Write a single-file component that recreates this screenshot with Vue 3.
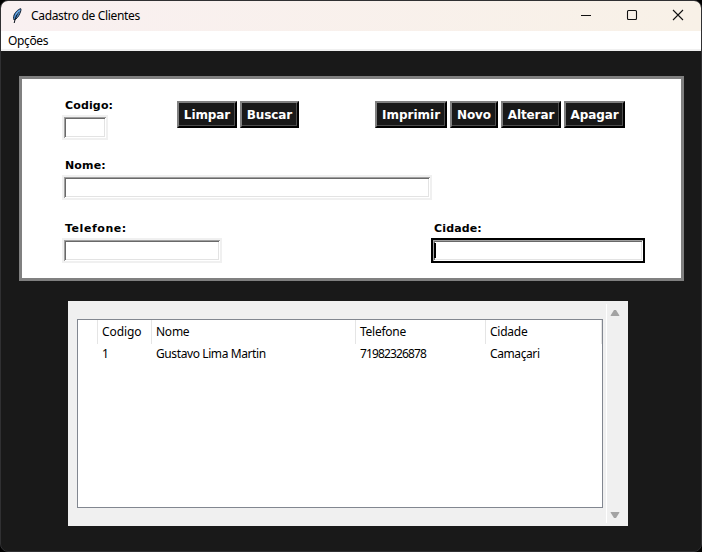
<script setup>
import { ref } from 'vue'

const searchActions = ['Limpar', 'Buscar']
const recordActions = ['Imprimir', 'Novo', 'Alterar', 'Apagar']
const columns = ['Codigo', 'Nome', 'Telefone', 'Cidade']
const clients = ref([
  { Codigo: '1', Nome: 'Gustavo Lima Martin', Telefone: '71982326878', Cidade: 'Camaçari' },
])
</script>

<template>
  <div class="window">
    <header class="titlebar">
      <svg class="feather" width="12" height="18" viewBox="0 0 12 18">
        <path d="M9.800 1.700C7 2.200 3.400 5.800 2.700 9.400c-.3 1.500-.1 2.700.4 3.600 2.200-.7 4.500-3.300 5.700-6.400C9.700 4.500 10.300 2.800 9.800 1.700z" fill="#4b8fd8" stroke="#14202e" stroke-width="1" />
        <path d="M8 4.500C6 7 4.300 11 3.200 16" fill="none" stroke="#101820" stroke-width="1.100" />
        <path d="M8.800 3.300L5 7.500" stroke="#8fc4f2" stroke-width="1" />
      </svg>
      <span class="title">Cadastro de Clientes</span>
      <div class="controls">
        <svg width="12" height="12" viewBox="0 0 12 12"><path d="M1 6.500h10" /></svg>
        <svg width="12" height="12" viewBox="0 0 12 12"><rect x="1.500" y="1.500" width="9" height="9" rx="1" /></svg>
        <svg width="12" height="12" viewBox="0 0 12 12"><path d="M1 1l10 10M11 1L1 11" /></svg>
      </div>
    </header>
    <nav class="menubar"><span>Opções</span></nav>

    <main class="content">
      <section class="form">
        <div class="row first">
          <label class="field code">
            <span>Codigo:</span>
            <i class="entry"></i>
          </label>
          <div class="group">
            <button v-for="a in searchActions" :key="a" :class="a.toLowerCase()"><span>{{ a }}</span></button>
          </div>
          <div class="group records">
            <button v-for="a in recordActions" :key="a" :class="a.toLowerCase()"><span>{{ a }}</span></button>
          </div>
        </div>
        <div class="row second">
          <label class="field name">
            <span>Nome:</span>
            <i class="entry"></i>
          </label>
        </div>
        <div class="row third">
          <label class="field phone">
            <span>Telefone:</span>
            <i class="entry"></i>
          </label>
          <label class="field city">
            <span>Cidade:</span>
            <i class="entry focused"><b class="caret"></b></i>
          </label>
        </div>
      </section>

      <section class="list">
        <div class="tree">
          <div class="tr head">
            <span class="cell"></span>
            <span v-for="c in columns" :key="c" class="cell" :class="'c-' + c.toLowerCase()"><em>{{ c }}</em></span>
          </div>
          <div v-for="row in clients" :key="row.Codigo" class="tr">
            <span class="cell"></span>
            <span v-for="c in columns" :key="c" class="cell" :class="'v-' + c.toLowerCase()"><em>{{ row[c] }}</em></span>
          </div>
        </div>
        <div class="scrollbar">
          <svg width="10" height="8" viewBox="0 0 10 8"><path d="M.7 6.200L4 1h2l3.300 5.200V7H.7z" /></svg>
          <svg width="10" height="8" viewBox="0 0 10 8"><path d="M.7 1.800L4 7h2l3.300-5.200V1H.7z" /></svg>
        </div>
      </section>
    </main>
  </div>
</template>

<style>
body { background: #000; }
</style>

<style scoped>
* { box-sizing: border-box; }
.window {
  width: 702px;
  height: 552px;
  border: 1px solid #303032;
  border-radius: 8px;
  overflow: hidden;
  background: #191919;
  color: #000;
  font: 12px/16px "Noto Sans", "Open Sans", sans-serif;
  display: flex;
  flex-direction: column;
}
.titlebar {
  height: 30px;
  flex: none;
  display: flex;
  align-items: center;
  padding-left: 10px;
  background: linear-gradient(90deg, #f9f0f1, #f8f1e7);
}
.feather { margin-right: 8px; margin-top: -1px; }
.title { letter-spacing: -0.34px; white-space: nowrap; }
.controls { margin-left: auto; display: flex; gap: 34px; padding-right: 17px; margin-top: -2px; }
.controls svg { fill: none; stroke: #111; stroke-width: 1.1; }
.menubar {
  height: 20px;
  flex: none;
  padding: 2px 7px 0;
  background: #fff;
  border-bottom: 2px solid #f0f0f0;
}
.menubar span { letter-spacing: -0.35px; }
.content { padding: 25px 17px 0 18px; }
.form {
  height: 205px;
  border: 3px solid #808080;
  background: #fff;
  padding: 19px 0 0 40px;
  font: bold 11px/14px "DejaVu Sans", sans-serif;
}
.row { display: flex; }
.first { height: 60px; }
.second { height: 63px; }
.field { display: block; }
.field span { display: block; height: 17px; padding: 1px 0 0 3px; white-space: nowrap; letter-spacing: 0.15px; }
.phone span { letter-spacing: 0.55px; }
.code { width: 46px; }
.name { width: 370px; }
.phone { width: 160px; }
.city { width: 214px; margin-left: 209px; }
.entry {
  display: block;
  height: 25px;
  border: 2px solid #f0f0f0;
  background: #fff;
  box-shadow: inset 1px 1px #a0a0a0, inset -1px -1px #fff, inset 2px 2px #696969, inset -2px -2px #e3e3e3;
}
.focused { border-color: #000; padding: 3px 0 0 1px; }
.caret { display: block; width: 2px; height: 15px; background: #000; }
.group { display: flex; gap: 3px; margin: 3px 0 0 69px; }
.records { margin-left: 76px; }
button {
  height: 27px;
  padding: 0;
  border: 2px solid;
  border-color: #808080 #000 #000 #808080;
  border-radius: 0;
  background: #191919;
  box-shadow: inset -1px -1px #4d4d4d;
  color: #fff;
  font: bold 12px/14px "DejaVu Sans", sans-serif;
  letter-spacing: -0.1px;
  white-space: nowrap;
}
.limpar { width: 60px; }
.buscar { width: 59px; }
.imprimir { width: 72px; letter-spacing: 0; }
.novo { width: 48px; }
.alterar { width: 60px; }
.apagar { width: 61px; }
.list {
  width: 560px;
  height: 225px;
  margin: 20px 0 0 49px;
  padding: 3px 0 3px 9px;
  background: #f0f0f0;
  display: flex;
}
.tree {
  width: 526px;
  height: 189px;
  margin-top: 15px;
  border: 1px solid #828790;
  background: #fff;
}
.tr {
  display: grid;
  grid-template-columns: 20px 54px 204px 130px 116px;
  height: 20px;
}
.head { height: 24px; }
.cell { padding: 2px 0 0 4px; white-space: nowrap; }
.cell:first-child { padding-left: 0; }
.head .cell { padding-top: 4px; border-right: 1px solid #e5e5e5; }
em { font-style: normal; letter-spacing: -0.25px; }
.c-codigo em { letter-spacing: -0.1px; }
.v-nome em { letter-spacing: -0.4px; }
.v-telefone em { letter-spacing: -0.87px; }
.v-cidade em { letter-spacing: -0.4px; }
.scrollbar {
  width: 17px;
  margin-left: 3px;
  border-left: 1px solid #fff;
  padding: 5px 0 4px 3px;
  display: flex;
  flex-direction: column;
  justify-content: space-between;
}
.scrollbar svg { fill: #a3a3a3; }
</style>
